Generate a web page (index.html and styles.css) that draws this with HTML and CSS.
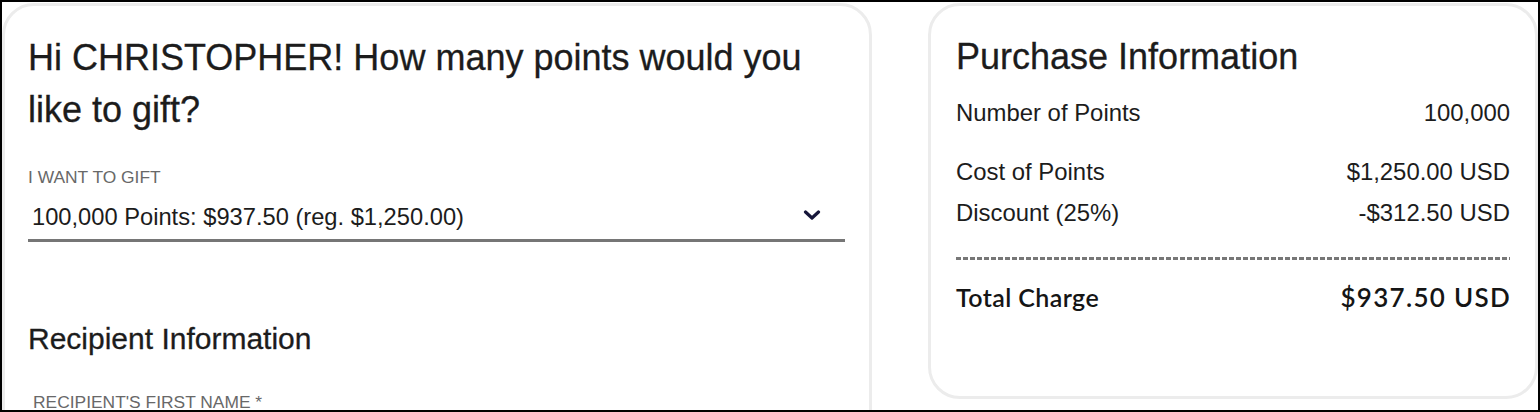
FILE: index.html
```html
<!DOCTYPE html>
<html lang="en">
<head>
    <meta charset="UTF-8">
    <meta name="viewport" content="width=device-width, initial-scale=1.0">
    <link rel="stylesheet" href="styles.css">
</head>
<body>

<div class="frame">
    <div class="card gift-card">
        <h1>Hi CHRISTOPHER! How many points would you like to gift?</h1>

        <label class="field-label" for="giftAmount">I want to gift</label>
        <div class="select-box">
            <span id="giftAmount">100,000 Points: $937.50 (reg. $1,250.00)</span>
            <svg class="chevron" width="18" height="10" viewBox="0 0 18 10">
                <polyline points="2.5,2 9,8 15.5,2" fill="none" stroke="#16163a" stroke-width="3.2" stroke-linecap="round" stroke-linejoin="round"/>
            </svg>
        </div>

        <h2>Recipient Information</h2>
        <label class="field-label indent" for="firstName">Recipient's first name *</label>
    </div>

    <div class="card summary-card">
        <h2 class="summary-title">Purchase Information</h2>
        <div class="row first">
            <span>Number of Points</span>
            <span>100,000</span>
        </div>
        <div class="row spaced">
            <span>Cost of Points</span>
            <span>$1,250.00 USD</span>
        </div>
        <div class="row tight">
            <span>Discount (25%)</span>
            <span>-$312.50 USD</span>
        </div>
        <div class="dashes"></div>
        <div class="row total">
            <span>Total Charge</span>
            <span class="total-value">$937.50 USD</span>
        </div>
    </div>
</div>

</body>
</html>
```

FILE: styles.css
```css
body {
    margin: 0;
    padding: 0;
    font-family: 'Liberation Sans', Arial, sans-serif;
    color: #1c1c1c;
    background: #ffffff;
}

.frame {
    box-sizing: border-box;
    width: 1540px;
    height: 412px;
    border: 2px solid #000000;
    padding-top: 1px;
    display: flex;
    gap: 56px;
    align-items: flex-start;
    overflow: hidden;
    background: #ffffff;
}

.card {
    box-sizing: border-box;
    border: 3px solid #ececec;
    border-radius: 32px;
    background: #ffffff;
}

/* left card */
.gift-card {
    width: 870px;
    height: 500px;
    padding: 26px 24px 0 23px;
    flex-shrink: 0;
}

.gift-card h1 {
    font-size: 36px;
    font-weight: normal;
    line-height: 52px;
    margin: 0;
    max-width: 800px;
    -webkit-text-stroke: 0.3px #1c1c1c;
}

.field-label {
    display: block;
    text-transform: uppercase;
    font-size: 17.4px;
    line-height: 20px;
    color: #686868;
    margin-top: 31px;
}

.field-label.indent {
    padding-left: 5px;
    margin-top: 35px;
}

.select-box {
    display: flex;
    align-items: flex-start;
    justify-content: space-between;
    border-bottom: 3px solid #767676;
    padding: 16px 24px 8px 4px;
    font-size: 23.7px;
    line-height: 28px;
}

.chevron {
    display: block;
    margin-top: 7px;
}

.gift-card h2 {
    font-size: 30px;
    font-weight: normal;
    line-height: 36px;
    margin: 79px 0 0;
    -webkit-text-stroke: 0.3px #1c1c1c;
}

/* right card */
.summary-card {
    width: 610px;
    height: 396px;
    padding: 29px 25px 0 25px;
    flex-shrink: 0;
}

.summary-title {
    font-size: 36px;
    font-weight: normal;
    line-height: 43px;
    margin: 0;
    -webkit-text-stroke: 0.3px #1c1c1c;
}

.row {
    display: flex;
    justify-content: space-between;
    font-size: 23.9px;
    line-height: 28px;
}

.row.first {
    margin-top: 21px;
}

.row.spaced {
    margin-top: 31px;
}

.row.tight {
    margin-top: 13px;
}

.dashes {
    height: 3px;
    margin-top: 30px;
    background: repeating-linear-gradient(90deg, #777777 0 5px, transparent 5px 7px);
}

.row.total {
    font-family: Lato, 'Liberation Sans', sans-serif;
    font-weight: 600;
    font-size: 25px;
    letter-spacing: 0.4px;
    line-height: 30px;
    margin-top: 22px;
    color: #151515;
}

.total-value {
    font-size: 26px;
    letter-spacing: 1.3px;
    margin-right: -1px;
}
```
